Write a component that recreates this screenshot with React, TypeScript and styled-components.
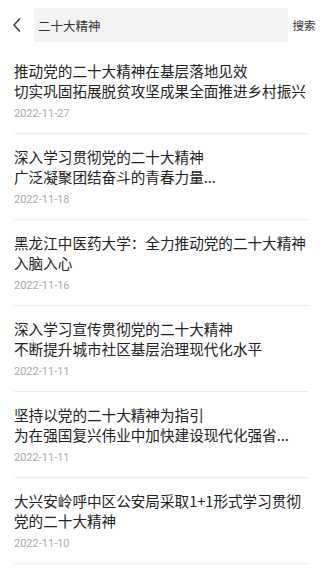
import styled, { createGlobalStyle } from 'styled-components';

const GlobalStyle = createGlobalStyle`
  html, body {
    margin: 0;
    padding: 0;
    background: #fff;
  }
  body {
    font-family: "Noto Sans CJK SC", "Noto Sans", sans-serif;
  }
`;

const Page = styled.div`
  width: 320px;
  background: #fff;
`;

const Header = styled.div`
  display: flex;
  align-items: center;
  height: 48px;
  box-sizing: border-box;
  padding: 8px 0 6px 10px;
`;

const BackButton = styled.button`
  width: 24px;
  height: 34px;
  padding: 0;
  border: none;
  background: none;
  display: flex;
  align-items: center;
  justify-content: flex-start;
  color: #333;
`;

const SearchBox = styled.div`
  flex: 1;
  height: 34px;
  background: #f3f3f3;
  display: flex;
  align-items: center;
  padding: 0 4px;
  font-size: 12.5px;
  color: #333;
`;

const SearchAction = styled.div`
  width: 32px;
  text-align: center;
  font-size: 11.5px;
  color: #333;
`;

const List = styled.div`
  padding: 0 12px 0 14px;
`;

const Item = styled.div`
  padding: 13px 0 12px;
  border-bottom: 1px solid #ededed;
`;

const Title = styled.div`
  font-size: 14.6px;
  line-height: 20px;
  color: #222;
  white-space: pre-line;
`;

const Date = styled.div`
  margin-top: 6px;
  font-family: Roboto, "Noto Sans", sans-serif;
  font-size: 11px;
  line-height: 14px;
  color: #aaa;
`;

const news = [
  { title: '推动党的二十大精神在基层落地见效\n切实巩固拓展脱贫攻坚成果全面推进乡村振兴', date: '2022-11-27' },
  { title: '深入学习贯彻党的二十大精神\n广泛凝聚团结奋斗的青春力量...', date: '2022-11-18' },
  { title: '黑龙江中医药大学：全力推动党的二十大精神入脑入心', date: '2022-11-16' },
  { title: '深入学习宣传贯彻党的二十大精神\n不断提升城市社区基层治理现代化水平', date: '2022-11-11' },
  { title: '坚持以党的二十大精神为指引\n为在强国复兴伟业中加快建设现代化强省...', date: '2022-11-11' },
  { title: '大兴安岭呼中区公安局采取1+1形式学习贯彻党的二十大精神', date: '2022-11-10' },
];

export default function App() {
  return (
    <Page>
      <GlobalStyle />
      <Header>
        <BackButton aria-label="返回">
          <svg width="14" height="16" viewBox="0 0 14 16" fill="none">
            <path d="M10 1.5 L4 8 L10 14.5" stroke="currentColor" strokeWidth="1.4" />
          </svg>
        </BackButton>
        <SearchBox>二十大精神</SearchBox>
        <SearchAction>搜索</SearchAction>
      </Header>
      <List>
        {news.map((n, i) => (
          <Item key={i}>
            <Title>{n.title}</Title>
            <Date>{n.date}</Date>
          </Item>
        ))}
      </List>
    </Page>
  );
}
